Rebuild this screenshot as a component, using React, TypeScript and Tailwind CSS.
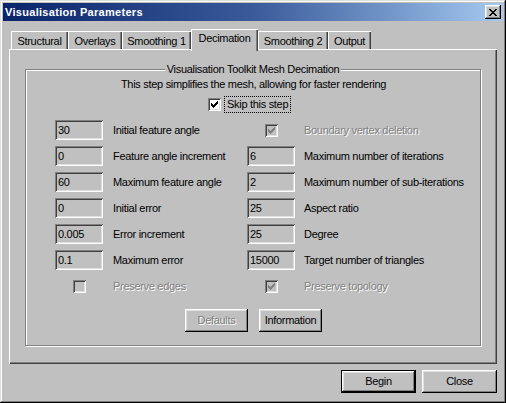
const raised =
  "shadow-[inset_-1px_-1px_0_#000,inset_1px_1px_0_#fff,inset_-2px_-2px_0_#808080,inset_2px_2px_0_#dfdfdf]";
const sunken =
  "shadow-[inset_1px_1px_0_#808080,inset_-1px_-1px_0_#fff,inset_2px_2px_0_#404040,inset_-2px_-2px_0_#dfdfdf]";
const dimText = "text-[#808080] [text-shadow:1px_1px_0_#fff]";

function Field({ value }: { value: string }) {
  return (
    <div className={`w-[48px] h-[20px] shrink-0 bg-[#c0c0c0] pl-[3px] leading-[20px] ${sunken}`}>
      {value}
    </div>
  );
}

function Check({ checked, disabled }: { checked?: boolean; disabled?: boolean }) {
  return (
    <div
      className={`relative w-[13px] h-[13px] shrink-0 ${disabled ? "bg-[#c0c0c0]" : "bg-white"} ${sunken}`}
    >
      {checked && (
        <svg
          width="7"
          height="7"
          viewBox="0 0 7 7"
          shapeRendering="crispEdges"
          className="absolute left-[3px] top-[3px]"
        >
          <path
            fill={disabled ? "#808080" : "#000"}
            d="M6 0h1v1H6z M5 1h2v1H5z M0 2h1v1H0z M4 2h3v1H4z M0 3h2v1H0z M3 3h3v1H3z M0 4h5v1H0z M1 5h3v1H1z M2 6h1v1H2z"
          />
        </svg>
      )}
    </div>
  );
}

function FieldRow({ value, label }: { value: string; label: string }) {
  return (
    <div className="flex items-center gap-[10px]">
      <Field value={value} />
      <span className="whitespace-nowrap">{label}</span>
    </div>
  );
}

function CheckRow({ label, checked }: { label: string; checked?: boolean }) {
  return (
    <div className="flex items-center gap-[10px]">
      <div className="w-[48px] flex justify-center pl-[1px]">
        <Check checked={checked} disabled />
      </div>
      <span className={`whitespace-nowrap ${dimText}`}>{label}</span>
    </div>
  );
}

const rows: [JSX.Element, JSX.Element][] = [
  [<FieldRow value="30" label="Initial feature angle" />, <CheckRow label="Boundary vertex deletion" checked />],
  [<FieldRow value="0" label="Feature angle increment" />, <FieldRow value="6" label="Maximum number of iterations" />],
  [<FieldRow value="60" label="Maximum feature angle" />, <FieldRow value="2" label="Maximum number of sub-iterations" />],
  [<FieldRow value="0" label="Initial error" />, <FieldRow value="25" label="Aspect ratio" />],
  [<FieldRow value="0.005" label="Error increment" />, <FieldRow value="25" label="Degree" />],
  [<FieldRow value="0.1" label="Maximum error" />, <FieldRow value="15000" label="Target number of triangles" />],
  [<CheckRow label="Preserve edges" />, <CheckRow label="Preserve topology" checked />],
];

const tabs = [
  { name: "Structural", w: "w-[57px]" },
  { name: "Overlays", w: "w-[54px]" },
  { name: "Smoothing 1", w: "w-[69px]" },
  { name: "Decimation", w: "w-[67px]", active: true },
  { name: "Smoothing 2", w: "w-[70px]" },
  { name: "Output", w: "w-[43px]" },
];

export default function App() {
  return (
    <div className="w-[506px] h-[403px] bg-[#c0c0c0] p-[3px] flex flex-col text-black text-[11px] tracking-[-0.3px] font-['Liberation_Sans',Arial,sans-serif] shadow-[inset_-1px_-1px_0_#000,inset_1px_1px_0_#dfdfdf,inset_-2px_-2px_0_#808080,inset_2px_2px_0_#fff]">
      {/* title bar */}
      <div className="h-[18px] shrink-0 flex items-center justify-between pl-[2px] pr-[2px] bg-linear-to-r from-[#0a246a] via-[#3a5a9a] to-[#a6caf0]">
        <span className="font-bold text-white tracking-[0.3px] leading-[18px]">Visualisation Parameters</span>
        <div className={`w-[16px] h-[14px] bg-[#c0c0c0] flex items-center justify-center ${raised}`}>
          <svg width="8" height="7" viewBox="0 0 8 7" shapeRendering="crispEdges">
            <path
              fill="#000"
              d="M0 0h2v1H0z M6 0h2v1H6z M1 1h2v1H1z M5 1h2v1H5z M2 2h4v1H2z M3 3h2v1H3z M2 4h4v1H2z M1 5h2v1H1z M5 5h2v1H5z M0 6h2v1H0z M6 6h2v1H6z"
            />
          </svg>
        </div>
      </div>

      {/* tabs */}
      <div className="mt-[8px] mx-[6px] h-[20px] pl-[2px] flex items-end">
        {tabs.map((t) =>
          t.active ? (
            <div
              key={t.name}
              className={`${t.w} relative z-10 h-[22px] mb-[-2px] bg-[#c0c0c0] text-center pt-[2px] leading-[14px] shadow-[inset_1px_1px_0_#fff,inset_-1px_0_0_#404040,inset_-2px_0_0_#808080]`}
            >
              {t.name}
            </div>
          ) : (
            <div
              key={t.name}
              className={`${t.w} h-[18px] text-center pt-[3px] leading-[14px] shadow-[inset_1px_1px_0_#fff,inset_-1px_0_0_#404040,inset_-2px_0_0_#808080]`}
            >
              {t.name}
            </div>
          )
        )}
      </div>

      {/* panel */}
      <div className="mx-[6px] h-[315px] shrink-0 flex flex-col shadow-[inset_1px_1px_0_#fff,inset_-1px_-1px_0_#404040,inset_-2px_-2px_0_#808080]">
        <fieldset className="mx-[16px] mt-[13px] h-[284px] border border-[#808080] shadow-[1px_1px_0_#fff,inset_1px_1px_0_#fff]">
          <legend className="mx-auto px-[2px] leading-[14px] bg-[#c0c0c0]">
            Visualisation Toolkit Mesh Decimation
          </legend>
          <div className="text-center leading-[14px] mt-[1px] pl-[1px]">
            This step simplifies the mesh, allowing for faster rendering
          </div>
          <div className="h-[26px] flex items-center pl-[182px] gap-[3px]">
            <Check checked />
            <span className="border border-dotted border-black px-[2px] leading-[15px]">Skip this step</span>
          </div>
          <div className="pl-[29px] flex flex-col">
            {rows.map(([l, r], i) => (
              <div key={i} className="h-[26px] flex items-center">
                <div className="w-[192px] shrink-0">{l}</div>
                <div className="[&>div]:gap-[9px]">{r}</div>
              </div>
            ))}
          </div>
          <div className="mt-[10px] flex justify-center gap-[11px] pl-[1px]">
            <button className={`w-[63px] h-[23px] bg-[#c0c0c0] ${raised} ${dimText}`}>Defaults</button>
            <button className={`w-[63px] h-[23px] bg-[#c0c0c0] ${raised}`}>Information</button>
          </div>
        </fieldset>
      </div>

      {/* bottom buttons */}
      <div className="mt-[6px] mr-[6px] flex justify-end gap-[6px]">
        <button className="w-[75px] h-[23px] bg-[#c0c0c0] border border-black shadow-[inset_-1px_-1px_0_#000,inset_1px_1px_0_#fff,inset_-2px_-2px_0_#808080,inset_2px_2px_0_#dfdfdf]">
          Begin
        </button>
        <button className={`w-[75px] h-[23px] bg-[#c0c0c0] ${raised}`}>Close</button>
      </div>
    </div>
  );
}
